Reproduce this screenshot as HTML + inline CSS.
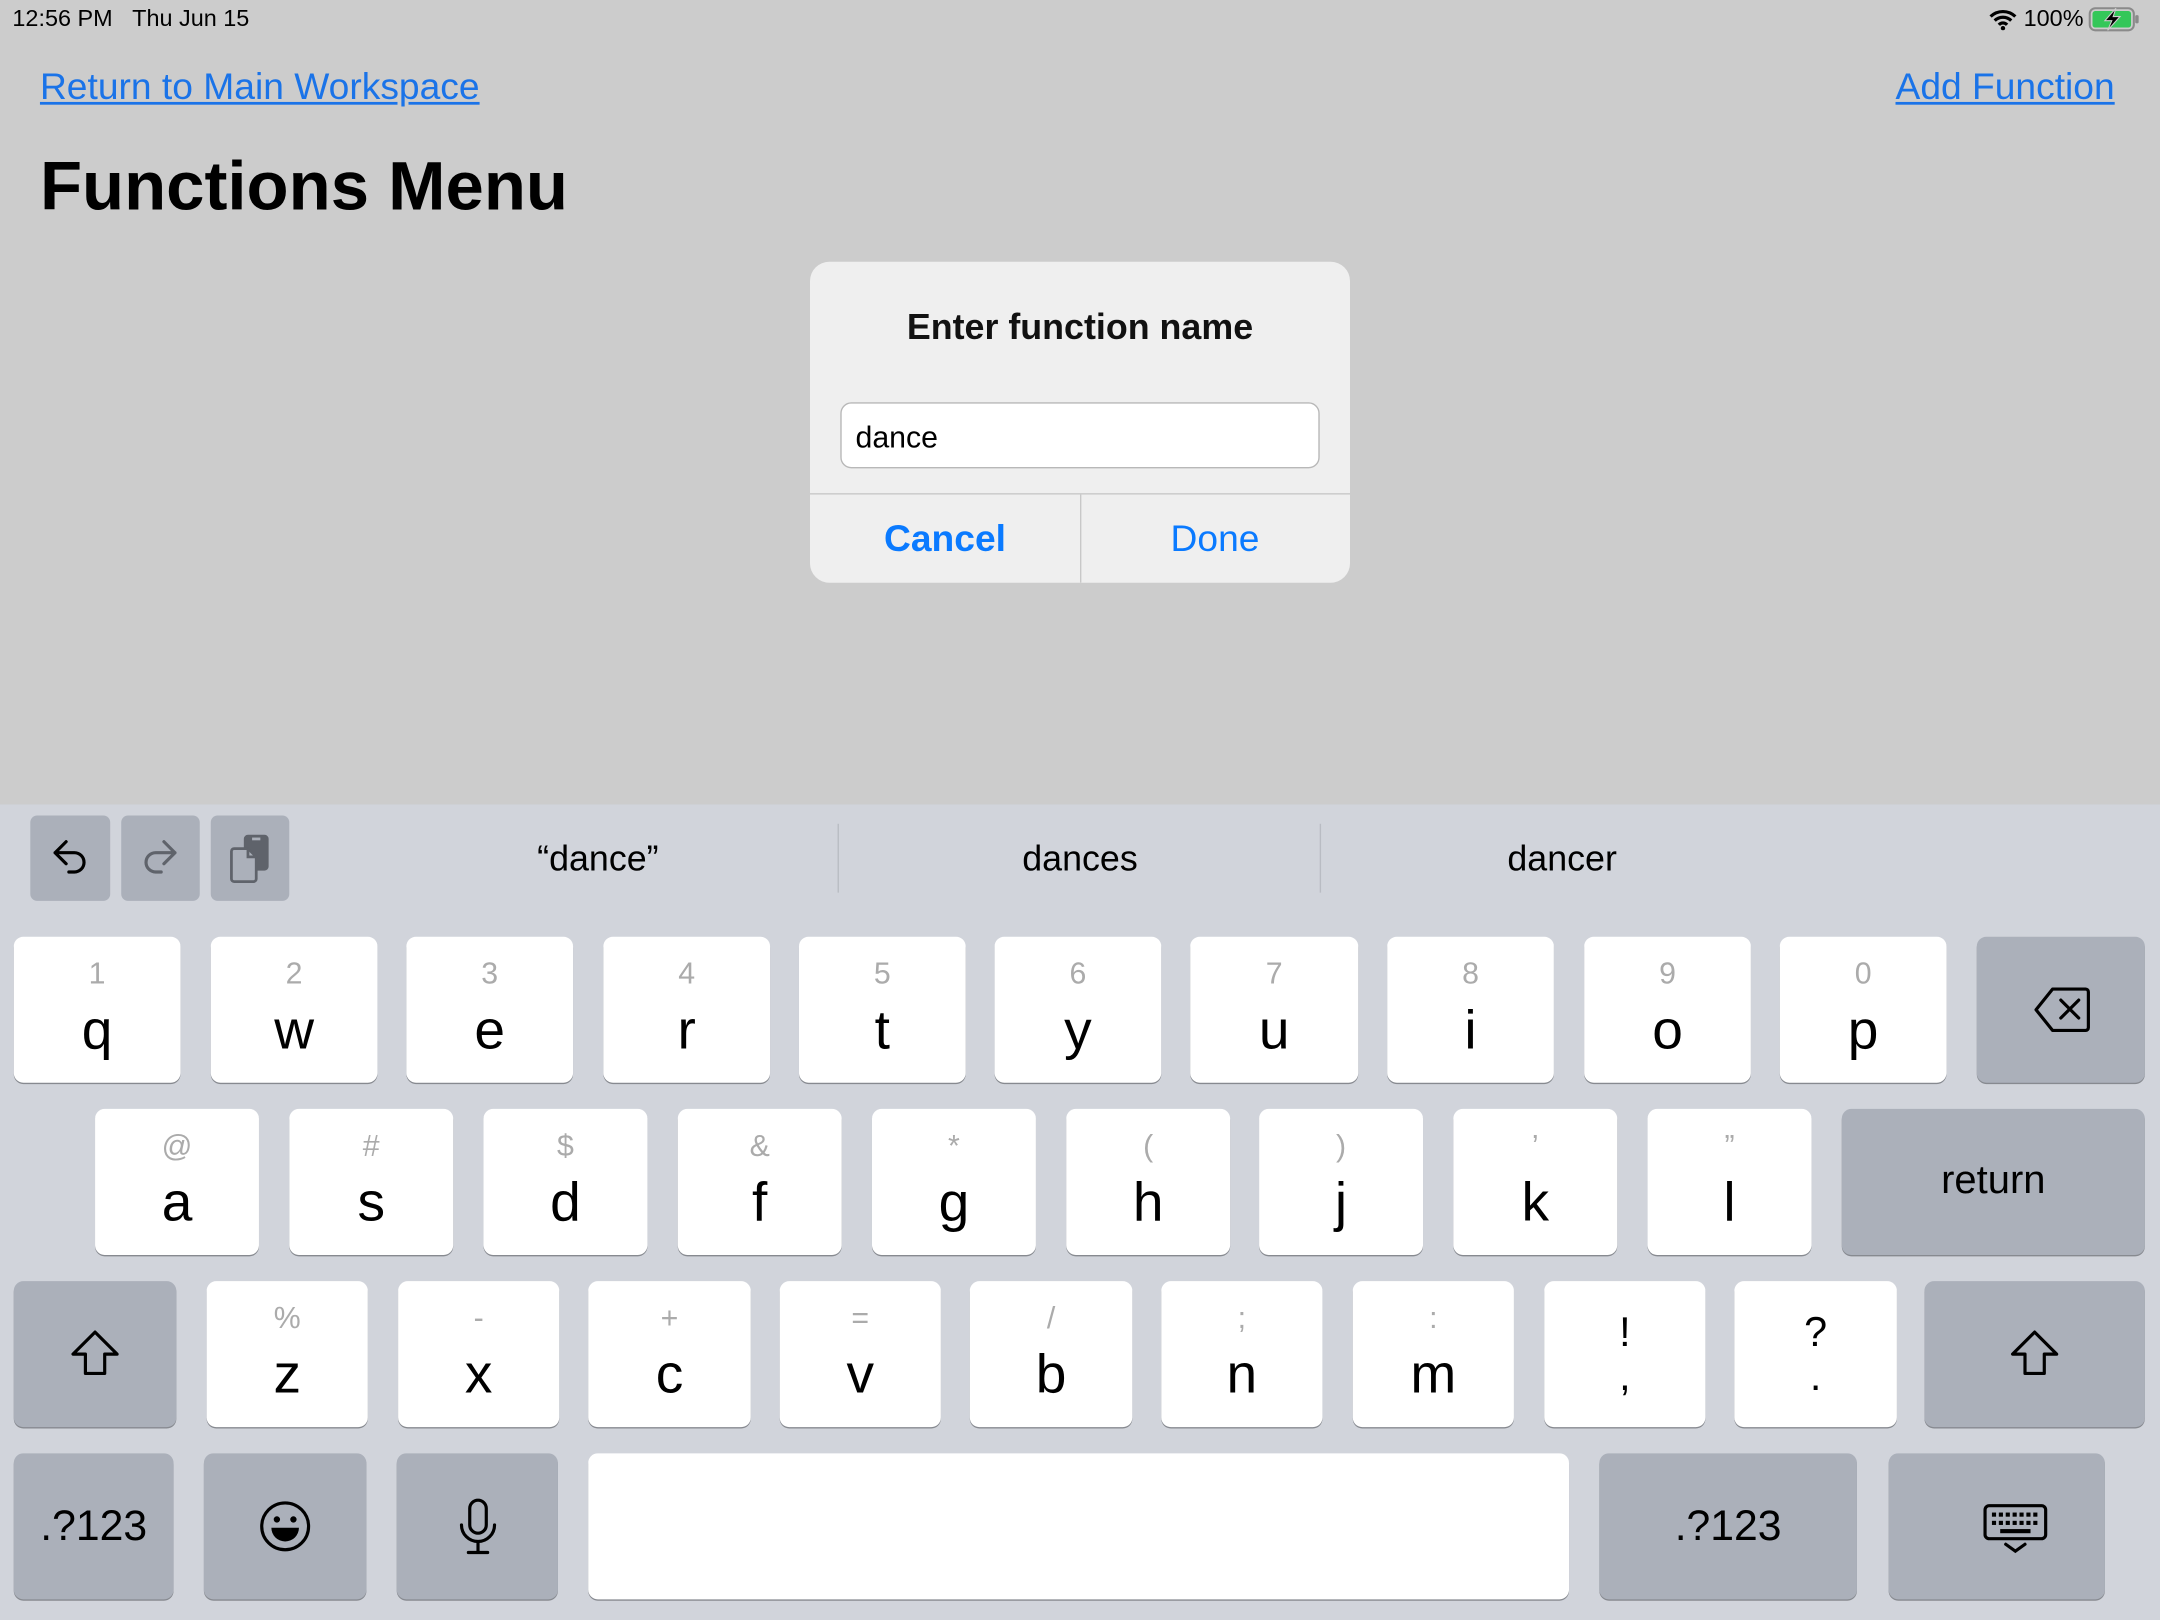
<!DOCTYPE html>
<html><head><meta charset="utf-8"><style>
html,body{margin:0;padding:0;width:2160px;height:1620px;overflow:hidden;background:#cccccc}
#w{position:absolute;left:0;top:0;width:1568px;height:1176px;transform:scale(1.377551);transform-origin:0 0;font-family:"Liberation Sans",sans-serif;background:#cccccc}
.a{position:absolute}
.k{position:absolute;background:#fff;border-radius:7px;box-shadow:0 1px 0 #878a90;text-align:center;color:#000}
.s{background:#abb0ba}
.k .n{position:absolute;left:0;right:0;top:14px;font-size:22px;color:#ababab}
.k .l{position:absolute;left:0;right:0;top:48px;font-size:40px;line-height:1}
.kb{position:absolute;left:0;top:584px;width:1568px;height:592px;background:#d1d4db}
a{color:#1a73e8}
</style></head><body><div id="w">
<div class="a" style="left:9px;top:4px;font-size:17px;color:#000">12:56 PM&nbsp;&nbsp;&nbsp;Thu Jun 15</div>
<div class="a" style="left:1443px;top:4px;font-size:17px;color:#000;display:flex;align-items:center;gap:4px">
<svg width="22" height="16" viewBox="0 0 22 16"><path d="M2 6a13 13 0 0 1 18 0M5 9a8.5 8.5 0 0 1 12 0M8 12a4 4 0 0 1 6 0" stroke="#000" stroke-width="2.3" fill="none"/><circle cx="11" cy="14.5" r="1.6"/></svg>100%
<svg width="38" height="18" viewBox="0 0 38 18"><rect x="1" y="1" width="32" height="16" rx="4" fill="none" stroke="#8a8a8a" stroke-width="1.5"/><rect x="3" y="3" width="28" height="12" rx="2" fill="#34c759"/><rect x="34" y="6" width="2.5" height="6" rx="1" fill="#8a8a8a"/><path d="M20 1l-8 9h5l-3 7 9-10h-5z" fill="#000" stroke="#ccc" stroke-width="0.8"/></svg></div>
<a class="a" style="left:29px;top:48px;font-size:27px;text-decoration:underline">Return to Main Workspace</a>
<a class="a" style="left:1376px;top:48px;font-size:27px;text-decoration:underline">Add Function</a>
<div class="a" style="left:29px;top:106px;font-size:50px;font-weight:bold;color:#000">Functions Menu</div>
<div class="a" style="left:588px;top:190px;width:392px;height:233px;background:#efefef;border-radius:14px;overflow:hidden">
<div class="a" style="left:0;right:0;top:32px;text-align:center;font-size:26px;font-weight:bold;color:#111">Enter function name</div>
<div class="a" style="left:22px;top:102px;width:346px;height:46px;background:#fff;border:1px solid #b8b8b8;border-radius:8px"><div style="position:absolute;left:10px;top:12px;font-size:22px;color:#000">dance</div></div>
<div class="a" style="left:0;right:0;top:168px;height:1px;background:#c8c8c8"></div>
<div class="a" style="left:196px;top:169px;width:1px;height:64px;background:#c8c8c8"></div>
<div class="a" style="left:0;width:196px;top:186px;text-align:center;font-size:27px;font-weight:bold;color:#0a7aff">Cancel</div>
<div class="a" style="left:196px;width:196px;top:186px;text-align:center;font-size:27px;color:#0a7aff">Done</div>
</div>
<div class="kb"></div>
<div class="a" style="left:22px;top:592px;width:58px;height:62px;background:#abb0ba;border-radius:5px"><svg class="a" style="left:14px;top:16px" width="30" height="30" viewBox="0 0 30 30"><path d="M12 3L4 11l8 8M4 11h14a7 7 0 0 1 0 14h-4" stroke="#000" stroke-width="2.3" fill="none" stroke-linecap="round" stroke-linejoin="round"/></svg></div>
<div class="a" style="left:88px;top:592px;width:57px;height:62px;background:#abb0ba;border-radius:5px"><svg class="a" style="left:13px;top:16px" width="30" height="30" viewBox="0 0 30 30"><path d="M18 3l8 8-8 8M26 11H12a7 7 0 0 0 0 14h4" stroke="#5f636b" stroke-width="2.3" fill="none" stroke-linecap="round" stroke-linejoin="round"/></svg></div>
<div class="a" style="left:153px;top:592px;width:57px;height:62px;background:#abb0ba;border-radius:5px"><svg class="a" style="left:13px;top:12px" width="32" height="38" viewBox="0 0 32 38"><rect x="11" y="2" width="18" height="26" rx="3" fill="#5f636b"/><rect x="17" y="4" width="6" height="2" fill="#abb0ba"/><path d="M4 12h10l6 6v16a2 2 0 0 1-2 2H4a2 2 0 0 1-2-2V14a2 2 0 0 1 2-2z" fill="#abb0ba" stroke="#5f636b" stroke-width="2"/><path d="M14 12v6h6" fill="none" stroke="#5f636b" stroke-width="2"/></svg></div>
<div class="a" style="left:260px;width:348px;top:608px;text-align:center;font-size:26px;color:#000">“dance”</div>
<div class="a" style="left:608px;top:598px;width:1px;height:50px;background:#b9bcc3"></div>
<div class="a" style="left:610px;width:348px;top:608px;text-align:center;font-size:26px;color:#000">dances</div>
<div class="a" style="left:958px;top:598px;width:1px;height:50px;background:#b9bcc3"></div>
<div class="a" style="left:960px;width:348px;top:608px;text-align:center;font-size:26px;color:#000">dancer</div>

<div class="k" style="left:10px;top:680px;width:121px;height:106px"><div class="n">1</div><div class="l">q</div></div>
<div class="k" style="left:153px;top:680px;width:121px;height:106px"><div class="n">2</div><div class="l">w</div></div>
<div class="k" style="left:295px;top:680px;width:121px;height:106px"><div class="n">3</div><div class="l">e</div></div>
<div class="k" style="left:438px;top:680px;width:121px;height:106px"><div class="n">4</div><div class="l">r</div></div>
<div class="k" style="left:580px;top:680px;width:121px;height:106px"><div class="n">5</div><div class="l">t</div></div>
<div class="k" style="left:722px;top:680px;width:121px;height:106px"><div class="n">6</div><div class="l">y</div></div>
<div class="k" style="left:864px;top:680px;width:122px;height:106px"><div class="n">7</div><div class="l">u</div></div>
<div class="k" style="left:1007px;top:680px;width:121px;height:106px"><div class="n">8</div><div class="l">i</div></div>
<div class="k" style="left:1150px;top:680px;width:121px;height:106px"><div class="n">9</div><div class="l">o</div></div>
<div class="k" style="left:1292px;top:680px;width:121px;height:106px"><div class="n">0</div><div class="l">p</div></div>
<div class="k s" style="left:1435px;top:680px;width:122px;height:106px"><svg class="a" style="left:41px;top:36px" width="42" height="34" viewBox="0 0 42 34"><path d="M14 2h24a2 2 0 0 1 2 2v26a2 2 0 0 1-2 2H14L2 17z" fill="none" stroke="#000" stroke-width="2.3" stroke-linejoin="round"/><path d="M20 10l13 13M33 10L20 23" stroke="#000" stroke-width="2.3" stroke-linecap="round"/></svg></div>

<div class="k" style="left:69px;top:805px;width:119px;height:106px"><div class="n">@</div><div class="l">a</div></div>
<div class="k" style="left:210px;top:805px;width:119px;height:106px"><div class="n">#</div><div class="l">s</div></div>
<div class="k" style="left:351px;top:805px;width:119px;height:106px"><div class="n">$</div><div class="l">d</div></div>
<div class="k" style="left:492px;top:805px;width:119px;height:106px"><div class="n">&amp;</div><div class="l">f</div></div>
<div class="k" style="left:633px;top:805px;width:119px;height:106px"><div class="n">*</div><div class="l">g</div></div>
<div class="k" style="left:774px;top:805px;width:119px;height:106px"><div class="n">(</div><div class="l">h</div></div>
<div class="k" style="left:914px;top:805px;width:119px;height:106px"><div class="n">)</div><div class="l">j</div></div>
<div class="k" style="left:1055px;top:805px;width:119px;height:106px"><div class="n">’</div><div class="l">k</div></div>
<div class="k" style="left:1196px;top:805px;width:119px;height:106px"><div class="n">”</div><div class="l">l</div></div>
<div class="k s" style="left:1337px;top:805px;width:220px;height:106px"><div style="position:absolute;left:0;right:0;top:36px;font-size:29px">return</div></div>

<div class="k s" style="left:10px;top:930px;width:118px;height:106px"><svg class="a" style="left:40px;top:34px" width="38" height="36" viewBox="0 0 38 36"><path d="M19 3L3 19h9v14h14V19h9z" fill="none" stroke="#000" stroke-width="2.3" stroke-linejoin="round"/></svg></div>
<div class="k" style="left:150px;top:930px;width:117px;height:106px"><div class="n">%</div><div class="l">z</div></div>
<div class="k" style="left:289px;top:930px;width:117px;height:106px"><div class="n">-</div><div class="l">x</div></div>
<div class="k" style="left:427px;top:930px;width:118px;height:106px"><div class="n">+</div><div class="l">c</div></div>
<div class="k" style="left:566px;top:930px;width:117px;height:106px"><div class="n">=</div><div class="l">v</div></div>
<div class="k" style="left:704px;top:930px;width:118px;height:106px"><div class="n">/</div><div class="l">b</div></div>
<div class="k" style="left:843px;top:930px;width:117px;height:106px"><div class="n">;</div><div class="l">n</div></div>
<div class="k" style="left:982px;top:930px;width:117px;height:106px"><div class="n">:</div><div class="l">m</div></div>
<div class="k" style="left:1121px;top:930px;width:117px;height:106px"><div style="position:absolute;left:0;right:0;top:22px;font-size:30px;line-height:1.05">!<br>,</div></div>
<div class="k" style="left:1259px;top:930px;width:118px;height:106px"><div style="position:absolute;left:0;right:0;top:22px;font-size:30px;line-height:1.05">?<br>.</div></div>
<div class="k s" style="left:1397px;top:930px;width:160px;height:106px"><svg class="a" style="left:61px;top:34px" width="38" height="36" viewBox="0 0 38 36"><path d="M19 3L3 19h9v14h14V19h9z" fill="none" stroke="#000" stroke-width="2.3" stroke-linejoin="round"/></svg></div>

<div class="k s" style="left:10px;top:1055px;width:116px;height:106px"><div style="position:absolute;left:0;right:0;top:35px;font-size:31px">.?123</div></div>
<div class="k s" style="left:148px;top:1055px;width:118px;height:106px"><svg class="a" style="left:40px;top:34px" width="38" height="38" viewBox="0 0 38 38"><circle cx="19" cy="19" r="17" fill="none" stroke="#000" stroke-width="2.3"/><circle cx="13" cy="14" r="2.3"/><circle cx="25" cy="14" r="2.3"/><path d="M9 20h20a10 10 0 0 1-20 0z"/></svg></div>
<div class="k s" style="left:288px;top:1055px;width:117px;height:106px"><svg class="a" style="left:44px;top:32px" width="30" height="42" viewBox="0 0 30 42"><rect x="9" y="2" width="12" height="24" rx="6" fill="none" stroke="#000" stroke-width="2.3"/><path d="M3 20a12 12 0 0 0 24 0M15 32v7M8 40h14" fill="none" stroke="#000" stroke-width="2.3" stroke-linecap="round"/></svg></div>
<div class="k" style="left:427px;top:1055px;width:712px;height:106px"></div>
<div class="k s" style="left:1161px;top:1055px;width:187px;height:106px"><div style="position:absolute;left:0;right:0;top:35px;font-size:31px">.?123</div></div>
<div class="k s" style="left:1371px;top:1055px;width:157px;height:106px"><svg class="a" style="left:68px;top:36px" width="48" height="38" viewBox="0 0 48 38"><rect x="2" y="2" width="44" height="24" rx="3" fill="none" stroke="#000" stroke-width="2.3"/><g fill="#000"><rect x="7" y="7" width="3" height="3"/><rect x="12" y="7" width="3" height="3"/><rect x="17" y="7" width="3" height="3"/><rect x="22" y="7" width="3" height="3"/><rect x="27" y="7" width="3" height="3"/><rect x="32" y="7" width="3" height="3"/><rect x="37" y="7" width="3" height="3"/><rect x="7" y="13" width="3" height="3"/><rect x="12" y="13" width="3" height="3"/><rect x="17" y="13" width="3" height="3"/><rect x="22" y="13" width="3" height="3"/><rect x="27" y="13" width="3" height="3"/><rect x="32" y="13" width="3" height="3"/><rect x="37" y="13" width="3" height="3"/><rect x="13" y="19" width="22" height="3"/></g><path d="M17 30l7 5 7-5" fill="none" stroke="#000" stroke-width="2.3" stroke-linecap="round"/></svg></div>
</div></body></html>
